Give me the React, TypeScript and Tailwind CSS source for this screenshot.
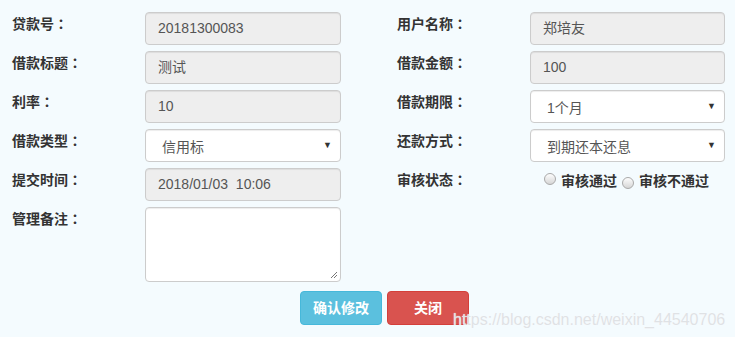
import React from "react";

const font = { fontFamily: '"Liberation Sans", "Noto Sans CJK SC", sans-serif' };

function Label({ children }: { children: React.ReactNode }) {
  return (
    <div className="w-[133px] shrink-0 pt-[1px] text-[14px] font-bold leading-5 text-[#333]">
      {children}
      <span style={{ fontFamily: '"Noto Sans CJK TC", sans-serif' }}>：</span>
    </div>
  );
}

function ReadOnly({ value, w }: { value: string; w: string }) {
  return (
    <div
      className={`${w} h-[33px] shrink-0 rounded-[4px] border border-[#ccc] bg-[#eee] px-3 text-[14px] leading-[31px] text-[#555] shadow-[inset_0_1px_1px_rgba(0,0,0,0.075)] whitespace-pre`}
    >
      {value}
    </div>
  );
}

function Select({ value, w }: { value: string; w: string }) {
  return (
    <div
      className={`${w} h-[33px] shrink-0 flex items-center justify-between rounded-[4px] border border-[#ccc] bg-white pl-4 pr-[8px] text-[14px] text-[#555] shadow-[inset_0_1px_1px_rgba(0,0,0,0.075)]`}
    >
      <span className="pt-[3px]">{value}</span>
      <span className="text-[9px] text-[#333]">▼</span>
    </div>
  );
}

function Radio({ label, lower }: { label: string; lower?: boolean }) {
  return (
    <span className="flex items-start">
      <span
        className={`mr-[5px] inline-block h-[12px] w-[12px] rounded-full border border-[#a9a9a9] bg-gradient-to-b from-[#fdfdfd] to-[#d6d6d6] ${lower ? "mt-[4px]" : "mt-0"}`}
      />
      <span className="-mt-[2px] text-[14px] font-bold leading-5 text-[#333]">{label}</span>
    </span>
  );
}

export default function App() {
  return (
    <div className="relative h-[337px] w-[735px] bg-[#f4fbfe]" style={font}>
      <div className="flex flex-col gap-[6px] pt-[12px] pl-[12px]">
        <div className="flex">
          <Label>贷款号</Label>
          <ReadOnly value="20181300083" w="w-[196px]" />
          <div className="ml-[56px] flex">
            <Label>用户名称</Label>
            <ReadOnly value="郑培友" w="w-[195px]" />
          </div>
        </div>
        <div className="flex">
          <Label>借款标题</Label>
          <ReadOnly value="测试" w="w-[196px]" />
          <div className="ml-[56px] flex">
            <Label>借款金额</Label>
            <ReadOnly value="100" w="w-[195px]" />
          </div>
        </div>
        <div className="flex">
          <Label>利率</Label>
          <ReadOnly value="10" w="w-[196px]" />
          <div className="ml-[56px] flex">
            <Label>借款期限</Label>
            <Select value="1个月" w="w-[195px]" />
          </div>
        </div>
        <div className="flex">
          <Label>借款类型</Label>
          <Select value="信用标" w="w-[196px]" />
          <div className="ml-[56px] flex">
            <Label>还款方式</Label>
            <Select value="到期还本还息" w="w-[195px]" />
          </div>
        </div>
        <div className="flex">
          <Label>提交时间</Label>
          <ReadOnly value="2018/01/03  10:06" w="w-[196px]" />
          <div className="ml-[56px] flex">
            <Label>审核状态</Label>
            <div className="ml-[14px] flex gap-[5px] pt-[5px]">
              <Radio label="审核通过" />
              <Radio label="审核不通过" lower />
            </div>
          </div>
        </div>
        <div className="flex">
          <Label>管理备注</Label>
          <div className="relative h-[75px] w-[196px] rounded-[4px] border border-[#ccc] bg-white shadow-[inset_0_1px_1px_rgba(0,0,0,0.075)]">
            <svg className="absolute bottom-[2px] right-[2px]" width="9" height="9" viewBox="0 0 9 9">
              <path d="M8 2 L2 8 M8 5 L5 8" stroke="#777" strokeWidth="1" />
            </svg>
          </div>
        </div>
      </div>
      <div className="mt-[9px] flex gap-[5px] pl-[300px]">
        <button className="h-[34px] w-[82px] rounded-[4px] border border-[#46b8da] bg-[#5bc0de] text-[14px] font-bold text-white">
          确认修改
        </button>
        <button className="h-[34px] w-[82px] rounded-[4px] border border-[#d43f3a] bg-[#d9534f] text-[14px] font-bold text-white">
          关闭
        </button>
      </div>
      <div className="pointer-events-none absolute left-[453px] top-[308px] text-[16px] text-[#dfe2e5] [text-shadow:0_0_1px_#fff]">
        https://blog.csdn.net/weixin_44540706
      </div>
    </div>
  );
}
